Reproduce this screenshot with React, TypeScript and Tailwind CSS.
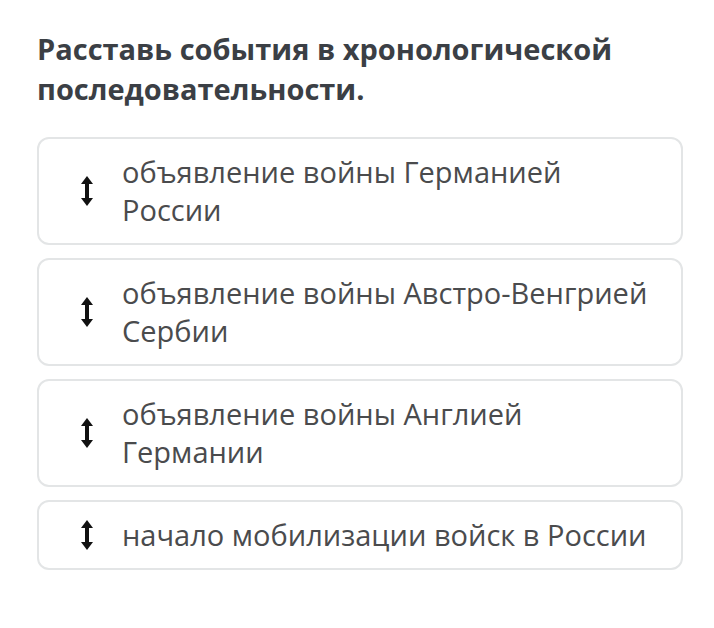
const items: string[][] = [
    ["объявление войны Германией", "России"],
    ["объявление войны Австро-Венгрией", "Сербии"],
    ["объявление войны Англией", "Германии"],
    ["начало мобилизации войск в России"],
];

function SortIcon() {
    return (
        <svg width="12" height="30" viewBox="0 0 12 30" fill="#111">
            <path d="M6 0 L12 8 L8 8 L8 22 L12 22 L6 30 L0 22 L4 22 L4 8 L0 8 Z" />
        </svg>
    );
}

export default function App() {
    return (
        <div
            className="min-h-[628px] w-[714px] bg-white pl-[37px] pr-[31px] pt-[29px]"
            style={{ fontFamily: '"Open Sans", "Noto Sans", sans-serif' }}
        >
            <h1 className="text-[29px] font-bold leading-[40px] text-[#3b3f45]">
                Расставь события в хронологической
                <br />
                последовательности.
            </h1>

            <div className="mt-[28px] flex flex-col gap-[13px]">
                {items.map((lines, i) => (
                    <div
                        key={i}
                        className="flex items-center rounded-[12px] border-2 border-[#e3e5e6] py-[14px] pl-[42px]"
                    >
                        <SortIcon />
                        <div className="ml-[29px] text-[29px] leading-[38px] text-[#4a4b4d]">
                            {lines.map((l, j) => (
                                <div key={j}>{l}</div>
                            ))}
                        </div>
                    </div>
                ))}
            </div>
        </div>
    );
}
